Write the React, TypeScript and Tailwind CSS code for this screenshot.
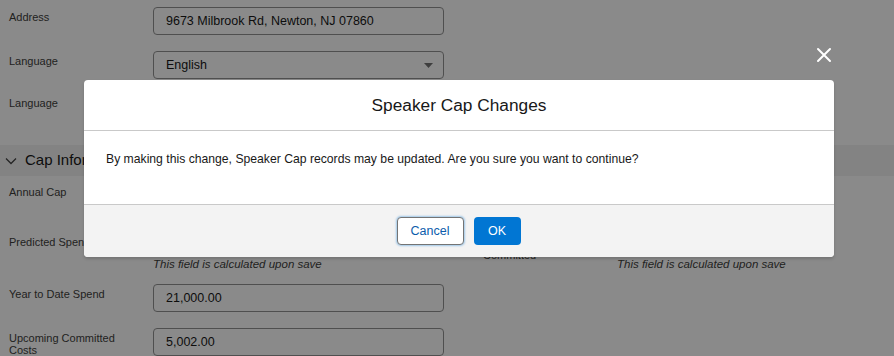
import React from "react";

const font = { fontFamily: "'Liberation Sans', Arial, sans-serif" };

function Label({ children, w = "w-[153px]" }: { children: React.ReactNode; w?: string }) {
  return <div className={`${w} pl-[9px] pt-[3px] text-[11px] leading-[14px] text-[#3e3e3c]`}>{children}</div>;
}

function Input({ value, select }: { value?: string; select?: boolean }) {
  return (
    <div className="w-[291px] h-[28px] border border-[#939393] rounded-[4px] bg-white flex items-center pl-[12px] pr-[10px] text-[12.5px] text-[#181818] justify-between">
      <span>{value}</span>
      {select && (
        <svg width="9" height="5" viewBox="0 0 9 5"><path d="M0 0h9L4.5 5z" fill="#747474" /></svg>
      )}
    </div>
  );
}

function Help() {
  return <div className="text-[11.5px] italic text-[#3e3e3c] leading-[14px]">This field is calculated upon save</div>;
}

export default function App() {
  return (
    <div className="relative w-[894px] h-[356px] overflow-hidden bg-white" style={font}>
      <div className="flex flex-col pt-[7px]">
        <div className="flex">
          <Label>Address</Label>
          <Input value="9673 Milbrook Rd, Newton, NJ 07860" />
        </div>
        <div className="flex mt-[16px]">
          <Label>Language</Label>
          <Input value="English" select />
        </div>
        <div className="flex mt-[14px]">
          <Label>Language</Label>
          <Input value="English" select />
        </div>
        <div className="mt-[24px] h-[31px] bg-[#f3f3f3] flex items-center pl-[5px] gap-[8px] text-[15px] text-[#181818]">
          <svg width="12" height="8" viewBox="0 0 12 8"><path d="M1 1.5l5 5 5-5" fill="none" stroke="#444" strokeWidth="1.3" /></svg>
          <span>Cap Information</span>
        </div>
        <div className="flex mt-[6px]">
          <Label>Annual Cap</Label>
          <Input value="50,000.00" />
          <div className="w-[30px]" />
          <Label w="w-[143px]">Annual Cap Remaining</Label>
        </div>
        <div className="flex mt-[22px]">
          <Label>Predicted Spend</Label>
          <div className="w-[291px]">
            <div className="h-[25px]"></div>
            <Help />
          </div>
          <div className="w-[30px]" />
          <div className="w-[143px] pl-[9px] pt-[5px] text-[11px] leading-[12px] text-[#3e3e3c]">Predicted Spend<br />Committed</div>
          <div className="w-[270px]">
            <div className="h-[25px]" />
            <Help />
          </div>
        </div>
        <div className="flex mt-[13px]">
          <Label>Year to Date Spend</Label>
          <Input value="21,000.00" />
        </div>
        <div className="flex mt-[16px]">
          <div className="w-[153px] pl-[9px] pt-[4px] text-[11px] leading-[12px] text-[#3e3e3c]">Upcoming Committed<br />Costs</div>
          <Input value="5,002.00" />
        </div>
      </div>

      <div className="absolute inset-0 bg-[rgba(0,0,0,0.46)]" />

      <svg className="absolute left-[816px] top-[47px]" width="16" height="16" viewBox="0 0 16 16">
        <path d="M2 2L14 14M14 2L2 14" stroke="white" strokeWidth="2" strokeLinecap="round" />
      </svg>

      <div className="absolute left-[84px] top-[80px] w-[750px] rounded-[4px] bg-white overflow-hidden shadow-[0_2px_3px_rgba(0,0,0,0.16)]">
        <div className="h-[51px] flex items-center justify-center border-b border-[#c9c9c9] text-[17.3px] text-[#181818] pt-[1px]">
          Speaker Cap Changes
        </div>
        <div className="h-[73px] pt-[20px] pl-[22px] text-[12.2px] leading-[16px] text-[#181818]">
          By making this change, Speaker Cap records may be updated. Are you sure you want to continue?
        </div>
        <div className="h-[53px] bg-[#f3f3f3] border-t border-[#c9c9c9] flex items-center justify-center gap-[10px] pr-[1px]">
          <button className="h-[28px] w-[67px] rounded-[4px] border border-[#747474] bg-white text-[12.5px] text-[#0b5cab] shadow-[0_0_2px_1px_rgba(1,118,211,0.35)]">Cancel</button>
          <button className="h-[28px] w-[47px] rounded-[4px] bg-[#0176d3] text-[12.5px] text-white">OK</button>
        </div>
      </div>
    </div>
  );
}
